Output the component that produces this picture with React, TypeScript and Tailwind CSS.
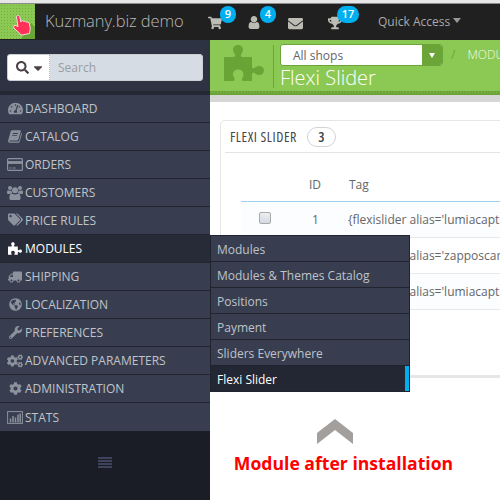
import React from "react";
import {
  FaTachometerAlt, FaCogs, FaCog, FaTags, FaTruck, FaGlobeAmericas, FaWrench,
  FaShoppingCart, FaEnvelope, FaTrophy, FaSearch, FaCaretDown,
} from "react-icons/fa";

function Puzzle({ className }: { className?: string }) {
  return (
    <svg viewBox="0 0 40 36" className={className} fill="currentColor">
      <path d="M0 12h9.500c1.600 0 2-1.200 1.500-2.500C10.300 8 9 7 9 4.800 9 2 11.200 0 14 0s5 2 5 4.800C19 7 17.700 8 17 9.500c-.500 1.300 0 2.500 1.500 2.500H28v9c0 2 1 2.800 2.500 2C32 22 33 21 35.200 21c2.800 0 4.800 2 4.800 4.500S38 30 35.200 30C33 30 32 29 30.500 28c-1.500-.800-2.500 0-2.500 2v6H18.500c-1-1.500-.500-2.500.500-4 .5-.7.500-1.500.500-2.500 0-3-2.200-5-5.500-5s-5 2-5 5c0 1 .2 1.800.8 2.500 1 1.500 1.200 2.500 0 4H0z" />
    </svg>
  );
}

function UserIcon() {
  return (
    <svg viewBox="256 128 1280 1536" className="h-[13px] w-3" fill="currentColor">
      <path d="M1536 1399q0 109-62.500 187t-150.500 78h-854q-88 0-150.500-78t-62.500-187q0-85 8.500-160.500t31.500-152 58.500-131 94-89 134.500-34.500q131 128 313 128t313-128q76 0 134.500 34.500t94 89 58.500 131 31.500 152 8.500 160.500zm-256-887q0 159-112.500 271.500t-271.500 112.500-271.500-112.500-112.500-271.500 112.500-271.500 271.500-112.500 271.500 112.500 112.500 271.500z" />
    </svg>
  );
}

function UsersIcon() {
  return (
    <svg viewBox="0 0 16 14" className="h-[14px] w-4" fill="currentColor">
      <circle cx="3" cy="2.100" r="2" />
      <circle cx="13" cy="2.100" r="2" />
      <circle cx="8" cy="4.200" r="3" />
      <path d="M1.200 4.300c1 .7 2.300.7 3.300.2 0 1 .3 1.900.9 2.600-.9 0-1.700.3-2.300.9H1.500C.5 8 0 7.500 0 6.700 0 5.700.3 4.400 1.200 4.300zM14.800 4.300c-1 .7-2.300.7-3.300.2 0 1-.3 1.900-.9 2.600.9 0 1.700.3 2.300.9h1.600c1 0 1.500-.5 1.500-1.300 0-1-.3-2.300-1.200-2.400z" />
      <path d="M5 7.500c1.800 1.300 4.200 1.300 6 0 2 0 2.600 2 2.600 4.400 0 1.300-.8 2.100-2.100 2.100h-7c-1.300 0-2.100-.8-2.100-2.100C2.400 9.500 3 7.500 5 7.500z" />
    </svg>
  );
}

function Card() {
  return (
    <svg viewBox="0 0 16 13" className="h-[13px] w-4" fill="none" stroke="currentColor">
      <rect x=".6" y=".6" width="14.800" height="11.800" rx="1" strokeWidth="1.200" />
      <path d="M1 4.500h14" strokeWidth="2.800" />
      <path d="M2.500 10h2M5.500 10h3" />
    </svg>
  );
}

function Stats() {
  return (
    <svg viewBox="0 0 16 13" className="h-[13px] w-4" fill="none" stroke="currentColor">
      <rect x=".6" y=".6" width="14.800" height="11.800" />
      <path d="M3.500 7.500v4M6 5v6.500M8.500 6.500v5M11 3.500v8M13.200 2.500v9" strokeWidth="1.500" />
    </svg>
  );
}

function Book() {
  return (
    <svg viewBox="0 0 14 13" className="h-[13px] w-3.5" fill="currentColor">
      <path d="M4 .3h8c.8 0 1 .5.8 1.200L10.300 9.500c-.2.700-.7 1-1.300 1H2c-.7 0-.9 1 0 1h8c.6 0 1-.3 1.200-.9L13.300 3c.6.200.7.800.5 1.400l-2 6.900c-.3 1-1 1.500-1.900 1.500H1.800C.5 12.800-.1 11.500.2 10.300L2.700 1.500C3 .8 3.400.3 4 .3zM5 3l-.3.900h5L10 3zm-.7 2.200-.3.900h5l.3-.9z" />
    </svg>
  );
}

const menu: [string, React.ReactNode][] = [
  ["DASHBOARD", <FaTachometerAlt size={15} />],
  ["CATALOG", <Book />],
  ["ORDERS", <Card />],
  ["CUSTOMERS", <UsersIcon />],
  ["PRICE RULES", <FaTags size={15} className="mb-[2px]" />],
  ["MODULES", <Puzzle className="h-[13px] w-3.5" />],
  ["SHIPPING", <FaTruck size={14} className="-scale-x-100" />],
  ["LOCALIZATION", <FaGlobeAmericas size={13} />],
  ["PREFERENCES", <FaWrench size={13} />],
  ["ADVANCED PARAMETERS", <FaCogs size={16} />],
  ["ADMINISTRATION", <FaCog size={13} />],
  ["STATS", <Stats />],
];

const submenu = ["Modules", "Modules & Themes Catalog", "Positions", "Payment", "Sliders Everywhere", "Flexi Slider"];
const tags = ["lumiacaption", "zapposcarousel", "lumiacaption"];

function Notice({ icon, count, wide }: { icon: React.ReactNode; count?: string; wide?: boolean }) {
  return (
    <div className="relative w-10 shrink-0 pt-[12px] text-[#bcbcb4]">
      {icon}
      {count && (
        <span className={`absolute top-[2px] flex h-[17px] items-center justify-center rounded-full bg-[#00aff0] text-[11px] font-semibold text-white ${wide ? "left-[9px] w-[22px]" : "left-[12px] w-4"}`}>
          {count}
        </span>
      )}
    </div>
  );
}

function Header() {
  return (
    <header className="flex h-10 border-t-[3px] border-[#e6e6e6] bg-[#202020]">
      <div className="flex w-full border-t border-[#8b8b8b]">
        <div className="relative h-[35px] w-[35px] shrink-0 bg-[#8bc954] bg-[radial-gradient(#70b03a_0.6px,transparent_0.8px)] bg-[size:3px_3px]">
          <svg viewBox="0 0 35 35" className="absolute inset-0">
            <path d="M21 35 31 19l4 4v12z" fill="#6aa536" />
            <path d="M16.500 13c0-2 3-2 3.300 0l1 5 .7-1c1-.7 2-.3 2.400.7.9-.8 2.200-.5 2.600.6 1.300-.6 2.700.2 2.900 1.600l.8 4.100c.3 2-.8 3.800-.8 5.500L21 31.200c-1-2.700-4.800-4.200-7.100-7.400-1-1.500.5-3 2.200-2.200l1.900 1.300z" fill="#ff3158" stroke="#f8dce0" strokeWidth="1" />
          </svg>
        </div>
        <div className="w-[173px] shrink-0 pl-[10px] text-[16.500px] leading-[34px] font-light tracking-[-0.1px] whitespace-nowrap text-[#b8b8b8]">Kuzmany.biz demo</div>
        <Notice icon={<FaShoppingCart size={14} />} count="9" />
        <Notice icon={<UserIcon />} count="4" />
        <Notice icon={<FaEnvelope size={15} />} />
        <Notice icon={<FaTrophy size={14} />} count="17" wide />
        <div className="flex h-9 items-center pl-[10px] text-[12px] whitespace-nowrap text-[#a9a9a9]">
          <span>Quick Access</span>
          <span className="mb-[3px] ml-[3px] border-x-[4.500px] border-t-[5px] border-x-transparent border-t-[#999]" />
        </div>
      </div>
    </header>
  );
}

function Sidebar() {
  return (
    <nav className="h-[460px] w-[210px] shrink-0 bg-[#1a1d25]">
      <div className="h-[55px] border-b-4 border-[#242834] bg-[#2d3342] px-[7px] pt-[14px]">
        <div className="flex h-[27px] w-[196px] overflow-hidden rounded-[3px] border border-[#cbced2] bg-[#d6dce4]">
          <div className="flex w-[42px] items-center border-r border-dotted border-[#aeb2b9] bg-white pl-2 text-[#4d4048]">
            <FaSearch size={13} />
            <FaCaretDown size={14} className="ml-[2px]" />
          </div>
          <span className="pl-2 text-[12px] leading-[26px] text-[#9a9c9f]">Search</span>
        </div>
      </div>
      {menu.map(([label, icon], i) => {
        const active = label === "MODULES";
        return (
          <div key={label} className={`flex h-7 items-center ${i < menu.length - 1 ? "border-b border-[#202530]" : ""} ${active ? "bg-[#272b37] text-white" : "bg-[#383e50] text-[#c0c4ca]"}`}>
            <span className={`ml-[7px] flex w-4 shrink-0 justify-center ${active ? "text-white" : "text-[#8b929d]"}`}>{icon}</span>
            <span className="ml-[2px] pt-px text-[12px] whitespace-nowrap">{label}</span>
          </div>
        );
      })}
      <div className="mx-auto mt-[26px] flex w-[14px] flex-col gap-[1px]">
        {[0, 1, 2, 3].map((n) => <span key={n} className="h-[2px] bg-[#3d435a]" />)}
      </div>
    </nav>
  );
}

function Submenu() {
  return (
    <div className="absolute top-[235px] left-[210px] w-[200px] border border-[#20242f] bg-[#383e50]">
      {submenu.map((name, i) => (
        <div key={name} className={`pl-[6px] text-[12px] leading-[27px] whitespace-nowrap ${i === 5 ? "h-[25px] border-r-4 border-[#00aff0] bg-[#232733] text-white" : "h-[26px] border-b border-[#20242f] text-[#bfc3c9]"}`}>
          {name}
        </div>
      ))}
    </div>
  );
}

export default function App() {
  return (
    <div className="relative h-[500px] w-[500px] overflow-hidden bg-white font-['Open_Sans',sans-serif]">
      <Header />
      <div className="flex">
        <Sidebar />
        <main className="h-[460px] w-[290px] overflow-hidden">
          <div className="flex h-[51px] bg-[#8cc954]">
            <div className="mt-[5px] ml-[14px] h-[43px] w-[50px] shrink-0 border-r border-[#6ca638] text-[#69a536]">
              <Puzzle className="h-9 w-10" />
            </div>
            <div className="shrink-0 pl-[6px]">
              <div className="mt-1 flex h-[22px] items-center whitespace-nowrap">
                <div className="flex h-[22px] w-[163px] shrink-0 overflow-hidden rounded-[3px] border border-[#6ba538] bg-white">
                  <span className="w-[141px] pl-3 text-[12px] leading-[22px] text-[#666]">All shops</span>
                  <span className="flex w-5 items-center justify-center bg-[#6ba538]"><i className="border-x-[3px] border-t-[5px] border-x-transparent border-t-white" /></span>
                </div>
                <span className="ml-2 text-[12px] text-[#6ba538]">/</span>
                <span className="ml-3 text-[12px] font-light text-[#f1fbe8]">MODULES</span>
              </div>
              <h1 className="text-[20px] leading-[24px] font-light text-white">Flexi Slider</h1>
            </div>
          </div>
          <div className="h-1 bg-[#6ba538] bg-[radial-gradient(#83bd50_0.6px,transparent_0.8px)] bg-[size:3px_3px]" />
          <div className="h-[7px] bg-[#d6d6d6]" />
          <section className="mt-[18px] ml-[10px] h-[258px] w-[320px] rounded-[5px] border border-b-[3px] border-[#e6e6e6]">
            <div className="ml-[4px] flex h-8 items-center border-b border-[#e4e4e4] pl-[5px]">
              <h2 className="w-[77px] text-[14px] leading-5 tracking-[0.55px] whitespace-nowrap text-[#464646] [font-stretch:75%]">FLEXI SLIDER</h2>
              <span className="flex h-5 w-[29px] items-center justify-center rounded-full border border-[#d2d3d8] text-[14px] font-semibold text-[#444] [font-stretch:75%]">3</span>
            </div>
            <div className="ml-5 text-[12px] whitespace-nowrap text-[#666]">
              <div className="flex h-[49px] items-end border-b border-[#a0d0eb] pb-[7px]">
                <span className="w-[108px] pl-[68px]">ID</span><span>Tag</span>
              </div>
              {tags.map((tag, i) => (
                <div key={i} className={`flex h-9 items-center border-b border-[#e8e8e8] ${i % 2 === 0 ? "bg-[#fbfdff]" : ""}`}>
                  <span className="mb-1 ml-[18px] h-3 w-3 rounded-[2px] border border-[#aaa] bg-linear-to-b from-[#eee] to-[#d3d9e4]" />
                  <span className="w-[77px] pl-[41px]">{i + 1}</span>
                  <span>{`{flexislider alias='${tag}'}`}</span>
                </div>
              ))}
            </div>
          </section>
          <div className="mt-[41px] ml-[24px] flex w-[219px] flex-col items-center">
            <svg viewBox="0 0 36 25" className="ml-[-17px] h-[25px] w-9"><path d="m0 14 18-14 18 14v11L18 11 0 25z" fill="#a29f9c" /></svg>
            <p className="mt-[7px] text-[17.600px] leading-6 font-bold whitespace-nowrap text-[#ff0000]">Module after installation</p>
          </div>
        </main>
      </div>
      <Submenu />
    </div>
  );
}
